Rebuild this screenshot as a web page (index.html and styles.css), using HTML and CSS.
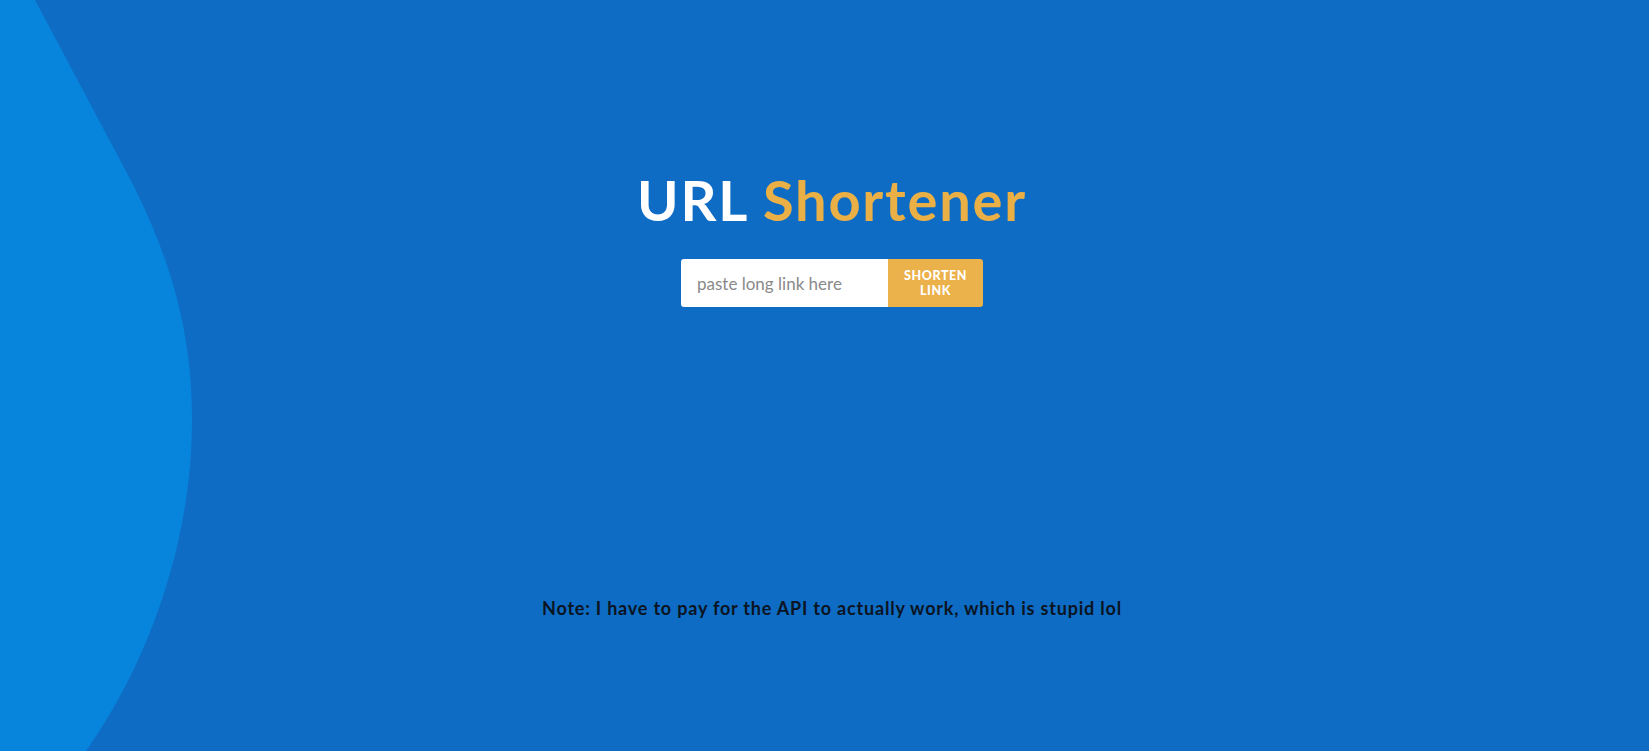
FILE: index.html
```html
<!DOCTYPE html>
<html lang="en">
<head>
<meta charset="utf-8">
<title>URL Shortener</title>
<link rel="stylesheet" href="styles.css">
</head>
<body>
<svg class="blob" width="200" height="751" viewBox="0 0 200 751" aria-hidden="true">
  <path d="M0 0 H35 L128 175 C175 265 192 340 192 420 C192 540 150 660 86 751 H0 Z" fill="#0784dc"/>
</svg>
<main class="page">
  <h1 class="title"><span class="title-white">URL</span> <span class="title-accent">Shortener</span></h1>
  <form class="shorten-form">
    <input class="link-input" type="text" placeholder="paste long link here">
    <button class="shorten-btn" type="button">SHORTEN<br>LINK</button>
  </form>
  <p class="note">Note: I have to pay for the API to actually work, which is stupid lol</p>
</main>
</body>
</html>
```

FILE: styles.css
```css
* { box-sizing: border-box; }
html, body { margin: 0; height: 100%; }
body {
  background: #0e6cc4;
  font-family: "Lato", "Open Sans", sans-serif;
  overflow: hidden;
  position: relative;
}
.blob {
  position: absolute;
  left: 0;
  top: 0;
  display: block;
}
.page {
  position: relative;
  display: flex;
  flex-direction: column;
  align-items: center;
  padding-top: 170px;
  padding-left: 15px;
}
.title {
  margin: 0;
  font-size: 56px;
  font-weight: 700;
  line-height: 60px;
  letter-spacing: 1.8px;
}
.title-white { color: #ffffff; }
.title-accent { color: #ebb045; }
.shorten-form {
  display: flex;
  margin-top: 29px;
  height: 48px;
  border-radius: 3px;
  overflow: hidden;
}
.link-input {
  width: 207px;
  border: none;
  outline: none;
  padding: 0 16px;
  font-family: inherit;
  font-size: 17px;
  color: #333;
  background: #fff;
}
.link-input::placeholder { color: #8a8a8a; }
.shorten-btn {
  width: 95px;
  border: none;
  background: #ebb14a;
  color: #fff;
  font-family: inherit;
  font-weight: 900;
  font-size: 12.5px;
  line-height: 15px;
  letter-spacing: 0.6px;
  padding: 0;
}
.note {
  margin: 290px 0 0;
  font-size: 18px;
  font-weight: 700;
  letter-spacing: 0.8px;
  color: #0b1422;
}
```
